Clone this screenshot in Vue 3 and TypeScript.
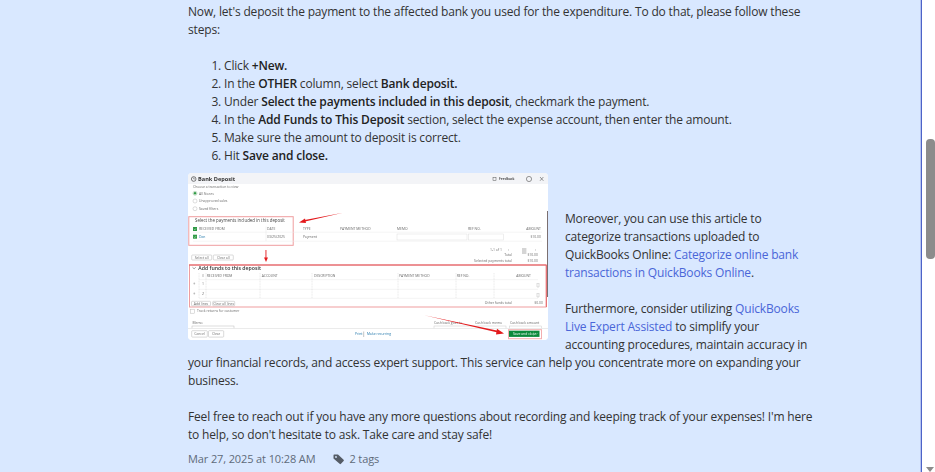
<script setup lang="ts">
interface Label { x: number; y: number; t: string; anchor?: string }

const steps: Array<Array<[string, boolean]>> = [
  [["Click ", false], ["+New.", true]],
  [["In the ", false], ["OTHER", true], [" column, select ", false], ["Bank deposit.", true]],
  [["Under ", false], ["Select the payments included in this deposit", true], [", checkmark the payment.", false]],
  [["In the ", false], ["Add Funds to This Deposit", true], [" section, select the expense account, then enter the amount.", false]],
  [["Make sure the amount to deposit is correct.", false]],
  [["Hit ", false], ["Save and close.", true]],
]

const tiny: Label[] = [
  { x: 5, y: 15, t: "Choose a transaction to view" },
  { x: 11, y: 21.5, t: "All Stores" },
  { x: 11, y: 29.2, t: "Unapproved sales" },
  { x: 11, y: 36.9, t: "Saved filters" },
  { x: 11, y: 57.2, t: "RECEIVED FROM" },
  { x: 79, y: 57.2, t: "DATE" },
  { x: 115, y: 57.2, t: "TYPE" },
  { x: 152, y: 57.2, t: "PAYMENT METHOD" },
  { x: 209, y: 57.2, t: "MEMO" },
  { x: 280, y: 57.2, t: "REF NO." },
  { x: 353, y: 57.2, t: "AMOUNT", anchor: "end" },
  { x: 79, y: 65, t: "03/25/2025" },
  { x: 115, y: 65, t: "Payment" },
  { x: 353, y: 65, t: "$10.00", anchor: "end" },
  { x: 302, y: 77.5, t: "1-1 of 1" },
  { x: 324, y: 83, t: "Total", anchor: "end" },
  { x: 350, y: 83, t: "$10.00", anchor: "end" },
  { x: 324, y: 88.5, t: "Selected payments total", anchor: "end" },
  { x: 350, y: 88.5, t: "$10.00", anchor: "end" },
  { x: 18.7, y: 104.2, t: "RECEIVED FROM" },
  { x: 73.7, y: 104.2, t: "ACCOUNT" },
  { x: 126, y: 104.2, t: "DESCRIPTION" },
  { x: 211, y: 104.2, t: "PAYMENT METHOD" },
  { x: 268.7, y: 104.2, t: "REF NO." },
  { x: 343, y: 104.2, t: "AMOUNT", anchor: "end" },
  { x: 14, y: 104.2, t: "#" },
  { x: 14, y: 111.5, t: "1" },
  { x: 14, y: 121.5, t: "2" },
  { x: 324, y: 131, t: "Other funds total", anchor: "end" },
  { x: 355, y: 131, t: "$0.00", anchor: "end" },
  { x: 9, y: 139, t: "Track returns for customer" },
  { x: 4.5, y: 150.5, t: "Memo" },
  { x: 246, y: 150.5, t: "Cash back goes to" },
  { x: 287, y: 150.5, t: "Cash back memo" },
  { x: 322, y: 150.5, t: "Cash back amount" },
]

const colLines = [11, 18, 72, 124, 210, 268, 306]
const buttons = [
  { x: 3.7, y: 82, w: 20, h: 5, t: "Select all" },
  { x: 25.3, y: 82, w: 20, h: 5, t: "Clear all" },
  { x: 3.5, y: 128.3, w: 19, h: 4.5, t: "Add lines" },
  { x: 24.7, y: 128.3, w: 22, h: 4.5, t: "Clear all lines" },
  { x: 3.7, y: 157.7, w: 15.6, h: 6.4, t: "Cancel" },
  { x: 20.5, y: 157.7, w: 15.2, h: 6.4, t: "Clear" },
]
</script>

<template>
  <div class="page">
    <main class="content">
      <article class="post">
        <p class="intro">Now, let's deposit the payment to the affected bank you used for the expenditure. To do that, please follow these steps:</p>
        <ol class="steps">
          <li v-for="(step, i) in steps" :key="i">
            <template v-for="(part, j) in step" :key="j">
              <strong v-if="part[1]">{{ part[0] }}</strong>
              <template v-else>{{ part[0] }}</template>
            </template>
          </li>
        </ol>
        <div class="wrap">
          <svg class="shot" width="360" height="167" viewBox="0 0 360 167" role="img" aria-label="Bank Deposit screen">
            <rect width="360" height="167" rx="4" fill="#fff" />
            <path d="M0 11V4a4 4 0 0 1 4-4h352a4 4 0 0 1 4 4v7z" fill="#f3f4f7" />
            <circle cx="5.7" cy="6" r="2.3" fill="none" stroke="#444" stroke-width=".7" />
            <path d="M5.7 4.6V6h1.2" fill="none" stroke="#444" stroke-width=".5" />
            <text x="10" y="8" class="title">Bank Deposit</text>
            <rect x="305" y="4.3" width="3" height="3" fill="none" stroke="#555" stroke-width=".5" />
            <text x="311" y="7.2" class="tiny strong">Feedback</text>
            <circle cx="341" cy="6" r="2.6" fill="none" stroke="#555" stroke-width=".6" />
            <path d="M352 4l3.4 3.8M355.4 4L352 7.8" stroke="#555" stroke-width=".6" />

            <circle cx="7" cy="20.3" r="2" fill="#fff" stroke="#8ab98f" stroke-width=".5" />
            <circle cx="7" cy="20.3" r="1.2" fill="#2f9a45" />
            <circle cx="7" cy="28" r="2" fill="#fff" stroke="#aaa" stroke-width=".4" />
            <circle cx="7" cy="35.7" r="2" fill="#fff" stroke="#aaa" stroke-width=".4" />

            <text v-for="l in tiny" :key="l.t + l.x + l.y" :x="l.x" :y="l.y" class="tiny" :text-anchor="l.anchor ?? 'start'">{{ l.t }}</text>

            <rect x=".8" y="43.7" width="104.4" height="28.6" fill="none" stroke="#ef9d9f" stroke-width="1" />
            <text x="7" y="49.4" class="heading">Select the payments included in this deposit</text>

            <path d="M5 59.2H354M5 68.2H354" stroke="#eaeaea" stroke-width=".5" />
            <path d="M78 53.5V68M78 53.5" stroke="#ddd" stroke-width=".4" />
            <rect x="5" y="54" width="4" height="4" fill="#2f9a45" />
            <rect x="5" y="61.7" width="4" height="4" fill="#2f9a45" />
            <path d="M5.9 56l.9.9 1.3-1.5M5.9 63.7l.9.9 1.3-1.5" fill="none" stroke="#fff" stroke-width=".4" />
            <text x="11" y="65" class="tiny link">Dan</text>
            <rect x="209" y="61" width="70" height="6" fill="#fff" stroke="#ddd" stroke-width=".5" />
            <rect x="280.5" y="61" width="35" height="6" fill="#fff" stroke="#ddd" stroke-width=".5" />

            <text x="320" y="77.5" class="tiny">‹</text>
            <rect x="334" y="75" width="4.4" height="6" fill="#d5d5d5" />
            <text x="347" y="77.5" class="tiny">›</text>

            <rect x="1.5" y="92" width="356.5" height="42" fill="none" stroke="#ef9d9f" stroke-width="1" />
            <path d="M1 92H358.5" stroke="#e25559" stroke-width="1" />
            <path d="M358.5 92V134" stroke="#e77478" stroke-width="1" />
            <path d="M4.5 94.3l1.6 1.5 1.6-1.5" fill="none" stroke="#555" stroke-width=".6" />
            <text x="10.3" y="97" class="sub">Add funds to this deposit</text>

            <path d="M11 106.7H350M11 116.3H350M11 125.3H350" stroke="#e8e8e8" stroke-width=".5" />
            <path v-for="x in colLines" :key="x" :d="`M${x} 100V125`" stroke="#d5d5d5" stroke-width=".5" stroke-dasharray="1 .6" />
            <circle cx="6.3" cy="110.5" r=".9" fill="#bbb" />
            <circle cx="6.3" cy="120.5" r=".9" fill="#bbb" />
            <path d="M348.5 110.5h3M349 111v3h2v-3M348.5 120.5h3M349 121v3h2v-3" fill="none" stroke="#bbb" stroke-width=".5" />

            <rect x="2.7" y="136.2" width="4" height="4" fill="#fff" stroke="#bbb" stroke-width=".5" />
            <rect x="4" y="153" width="42" height="4" fill="#fff" stroke="#bbb" stroke-width=".5" />
            <rect x="246" y="153" width="72" height="4" fill="#fff" stroke="#ccc" stroke-width=".5" />
            <rect x="321.5" y="153" width="32" height="4" fill="#fff" stroke="#ccc" stroke-width=".5" />

            <path d="M0 155.5H360V163a4 4 0 0 1-4 4H4a4 4 0 0 1-4-4z" fill="#fff" />
            <path d="M0 155.5H360" stroke="#e3e3e3" stroke-width=".7" />
            <template v-for="b in buttons" :key="b.t">
              <rect :x="b.x" :y="b.y" :width="b.w" :height="b.h" rx=".8" fill="#fff" stroke="#b5b5b5" stroke-width=".5" />
              <text :x="b.x + b.w / 2" :y="b.y + b.h / 2 + 1" class="tiny btn" text-anchor="middle">{{ b.t }}</text>
            </template>
            <text x="167" y="161.8" class="tiny link">Print</text>
            <path d="M175.7 158.5V164" stroke="#888" stroke-width=".5" />
            <text x="179" y="161.8" class="tiny link">Make recurring</text>
            <rect x="320.5" y="156.7" width="33" height="9" fill="none" stroke="#f3aeb0" stroke-width="1" />
            <rect x="321" y="157.7" width="30.5" height="6.2" fill="#0c8a3c" />
            <text x="325" y="162" class="tiny white">Save and close</text>
            <path d="M345.5 158.5V163" stroke="#7fc39a" stroke-width=".3" />
            <path d="M347.8 160.3l.9.8.9-.8" fill="none" stroke="#fff" stroke-width=".4" />

            <polygon points="155,39.8 115.5,47.3 116,48.8" fill="#e3191c" />
            <polygon points="117,45.5 111,49.4 118,50" fill="#e3191c" />
            <rect x="77.5" y="77" width=".9" height="9" fill="#e3191c" />
            <polygon points="76,84.5 80,84.5 78,89" fill="#e3191c" />
            <polygon points="236.3,142.2 310,157.8 309.6,159.4" fill="#e3191c" />
            <polygon points="309,155.8 316,160.5 308,161.5" fill="#e3191c" />

            <rect x="359" y="38" width="1" height="86" fill="#7b6f70" />
          </svg>
          <div class="aside">
            <p>Moreover, you can use this article to categorize transactions uploaded to QuickBooks Online: <a>Categorize online bank transactions in QuickBooks Online</a>.</p>
            <p>Furthermore, consider utilizing <a>QuickBooks Live Expert Assisted</a> to simplify your accounting procedures, maintain accuracy in your financial records, and access expert support. This service can help you concentrate more on expanding your business.</p>
            <p>Feel free to reach out if you have any more questions about recording and keeping track of your expenses! I'm here to help, so don't hesitate to ask. Take care and stay safe!</p>
          </div>
        </div>
        <div class="meta">
          <span>Mar 27, 2025 at 10:28 AM</span>
          <span class="tags">
            <svg width="12" height="11" viewBox="0 0 12 11" aria-hidden="true">
              <path d="M.5 1.2A.7.7 0 0 1 1.2.5H5l5.6 5.2a1 1 0 0 1 0 1.4L8 9.8a1 1 0 0 1-1.4 0L.5 4.5z" fill="#555c66" />
              <circle cx="3" cy="3" r=".9" fill="#d9e8ff" />
            </svg>
            2 tags
          </span>
        </div>
      </article>
    </main>
    <aside class="scrollbar">
      <div class="thumb"></div>
      <div class="arrow"></div>
    </aside>
  </div>
</template>

<style scoped>
.page {
  display: flex;
  width: 935px;
  height: 472px;
  overflow: hidden;
  font-family: "Open Sans", sans-serif;
  font-size: 12px;
  letter-spacing: -0.17px;
  line-height: 18px;
  color: #333;
}
.content {
  flex: 0 0 921px;
  box-sizing: border-box;
  height: 472px;
  padding: 3px 0 0 188px;
  background: #d9e8ff;
  box-shadow: inset -1px 0 0 #b4c3f0;
  overflow: hidden;
}
.post {
  width: 629px;
}
p {
  margin: 0;
}
.intro {
  margin-bottom: 18px;
}
.steps {
  margin: 0 0 8px;
  padding-left: 36px;
}
strong {
  font-weight: 600;
  color: #222;
}
.wrap::after {
  content: "";
  display: block;
  clear: both;
}
.shot {
  float: left;
  display: block;
  margin: 0 17px 12px 0;
  filter: blur(0.45px);
  letter-spacing: 0;
}
.aside {
  padding-top: 37px;
}
.aside p + p {
  margin-top: 18px;
}
.aside a {
  color: #4a66d8;
}
text {
  font-family: "Open Sans", sans-serif;
}
.tiny {
  font-size: 3.4px;
  fill: #6a6a6a;
}
.tiny.strong {
  fill: #333;
  font-weight: 600;
}
.tiny.link {
  fill: #2277aa;
}
.tiny.white {
  fill: #fff;
}
.title {
  font-size: 5.6px;
  font-weight: 700;
  fill: #333;
}
.heading {
  font-size: 4.4px;
  fill: #444;
}
.sub {
  font-size: 5.2px;
  font-weight: 600;
  fill: #333;
}
.meta {
  display: flex;
  gap: 18px;
  margin-top: 6px;
  font-size: 11px;
  letter-spacing: -0.12px;
  color: #5f6b7a;
}
.tags {
  display: flex;
  align-items: center;
  gap: 4px;
}
.scrollbar {
  position: relative;
  flex: 1;
  box-sizing: border-box;
  padding: 139px 0 0 4px;
  background: #fff;
  border-left: 1px solid #4d63c8;
}
.thumb {
  width: 9px;
  height: 120px;
  border-radius: 4px;
  background: #8c8c8c;
}
.arrow {
  position: absolute;
  left: 4px;
  bottom: 0;
  border-style: solid;
  border-width: 5px 4.5px 0;
  border-color: #8c8c8c transparent transparent;
}
</style>

<style>
html,
body {
  margin: 0;
  overflow: hidden;
}
</style>
